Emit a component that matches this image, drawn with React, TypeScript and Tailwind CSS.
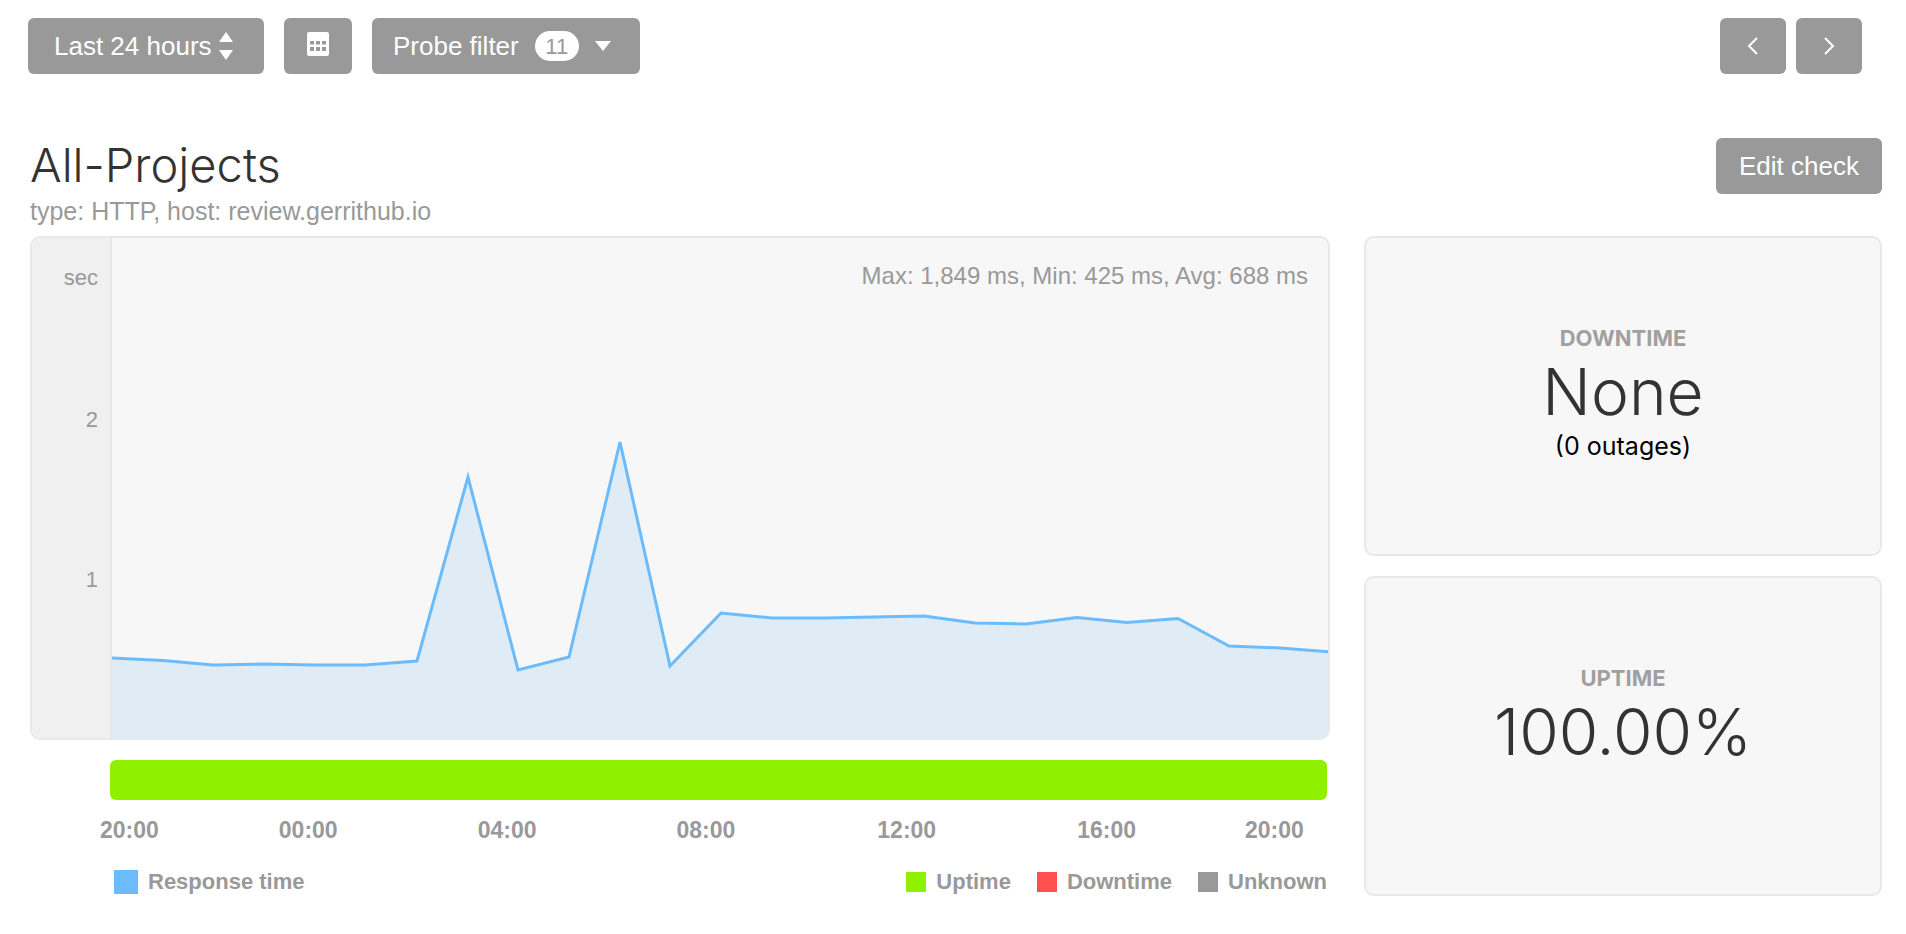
import React from "react";

const pts: [number, number][] = [
  [0, 420], [51, 422.5], [101, 427], [152, 426], [203, 427], [253, 427], [305, 423], [356, 239],
  [406, 432], [457, 419], [508, 204], [558, 428], [609, 375], [660, 380], [712, 380], [762, 379],
  [812, 378], [863, 385], [914, 386], [965, 379.5], [1015, 384.5], [1066, 380.5], [1117, 408], [1168, 410], [1218, 414],
];
const line = pts.map((p) => p.join(",")).join(" ");

const Btn = ({ className, children }: { className: string; children: React.ReactNode }) => (
  <button className={`flex h-14 items-center rounded-md bg-[#999] text-[26px] text-white ${className}`}>{children}</button>
);

const Legend = ({ color, label, className }: { color: string; label: string; className: string }) => (
  <div className={`flex items-center ${className}`}>
    <span className={`mr-[10px] h-5 w-5 ${color}`} />
    <span>{label}</span>
  </div>
);

const StatCard = ({ title, value, note }: { title: string; value: string; note?: string }) => (
  <div className="flex h-80 flex-col items-center rounded-[10px] border-2 border-[#e8e8e8] bg-[#f7f7f7] pt-[88px]">
    <div className="text-[22px] font-bold leading-6 text-[#a0a0a0]">{title}</div>
    <div className="mt-[4px] text-[64px] font-light leading-[76px] text-[#333]">{value}</div>
    {note && <div className="text-[25px] leading-8 text-black">{note}</div>}
  </div>
);

export default function App() {
  return (
    <div className="h-[934px] w-[1906px] overflow-hidden bg-white font-['Inter','Liberation_Sans',sans-serif]">
      <div className="flex items-start pl-7 pr-11 pt-[18px]">
        <Btn className="w-[236px] pl-[26px] font-['Liberation_Sans',sans-serif]">
          Last 24 hours
          <svg width="16" height="32" viewBox="0 0 16 32" className="ml-[6px]" fill="#fff">
            <path d="M8 2 L15 12 H1 Z" />
            <path d="M8 30 L15 20 H1 Z" />
          </svg>
        </Btn>
        <Btn className="ml-5 w-[68px] justify-center">
          <svg width="24" height="24" viewBox="0 0 24 24" fill="#fff" className="-mt-1">
            <path fillRule="evenodd" d="M3 0h18a2 2 0 0 1 2 2v20a2 2 0 0 1-2 2H3a2 2 0 0 1-2-2V2a2 2 0 0 1 2-2zM4 9v3.5h4V9zm6 0v3.5h4V9zm6 0v3.5h4V9zM4 15v4h4v-4zm6 0v4h4v-4zm6 0v4h4v-4z" />
          </svg>
        </Btn>
        <Btn className="ml-5 w-[268px] pl-[21px] font-['Liberation_Sans',sans-serif]">
          Probe filter
          <span className="ml-4 flex h-[30px] w-11 items-center justify-center rounded-full bg-white text-[22px] text-[#999]">11</span>
          <svg width="16" height="10" viewBox="0 0 16 10" className="ml-4" fill="#fff">
            <path d="M0 0 H16 L8 10 Z" />
          </svg>
        </Btn>
        <Btn className="ml-auto w-[66px] justify-center">
          <svg width="14" height="20" viewBox="0 0 14 20" fill="none" stroke="#fff" strokeWidth="2">
            <path d="M11 2 L3 10 L11 18" />
          </svg>
        </Btn>
        <Btn className="ml-[10px] w-[66px] justify-center">
          <svg width="14" height="20" viewBox="0 0 14 20" fill="none" stroke="#fff" strokeWidth="2">
            <path d="M3 2 L11 10 L3 18" />
          </svg>
        </Btn>
      </div>

      <div className="flex items-start justify-between pl-[30px] pr-6 pt-16">
        <div>
          <h1 className="text-[47px] font-light leading-[54px] text-[#333]">All-Projects</h1>
          <p className="mt-[4px] font-['Liberation_Sans',sans-serif] text-[25px] leading-[30px] text-[#999]">type: HTTP, host: review.gerrithub.io</p>
        </div>
        <Btn className="w-[166px] justify-center font-['Liberation_Sans',sans-serif]">Edit check</Btn>
      </div>

      <div className="flex gap-[34px] pl-[30px] pr-6 pt-[10px]">
        <div className="w-[1300px]">
          <div className="relative flex h-[504px] overflow-hidden rounded-[10px] border-2 border-[#e8e8e8] bg-[#f7f7f7]">
            <div className="w-[80px] shrink-0 border-r-2 border-[#e8e8e8] bg-[#f0f0f0] pr-[12px] pt-[26px] text-right font-['Liberation_Sans',sans-serif] text-[22px] leading-7 text-[#999]">
              <div>sec</div>
              <div className="mt-[114px]">2</div>
              <div className="mt-[132px]">1</div>
            </div>
            <svg viewBox="0 0 1218 500" className="h-[500px] w-[1218px] shrink-0">
              <polygon points={`0,500 ${line} 1218,500`} fill="#e0ecf5" />
              <polyline points={line} fill="none" stroke="#6cbcfb" strokeWidth="3" />
            </svg>
            <div className="absolute right-[20px] top-[24px] font-['Liberation_Sans',sans-serif] text-[24px] leading-7 text-[#999]">Max: 1,849 ms, Min: 425 ms, Avg: 688 ms</div>
          </div>

          <div className="ml-20 mt-5 h-10 w-[1217px] rounded-md bg-[#8ff000]" />

          <div className="mt-4 flex pl-[70px] font-['Liberation_Sans',sans-serif] text-[23px] font-bold leading-7 text-[#999]">
            <span>20:00</span>
            <span className="ml-[120px]">00:00</span>
            <span className="ml-[140px]">04:00</span>
            <span className="ml-[140px]">08:00</span>
            <span className="ml-[142px]">12:00</span>
            <span className="ml-[141px]">16:00</span>
            <span className="ml-[109px]">20:00</span>
          </div>

          <div className="mt-[26px] flex items-center pl-[84px] font-['Liberation_Sans',sans-serif] text-[22px] font-bold leading-6 text-[#999]">
            <span className="mr-[10px] h-6 w-6 bg-[#6cbcfb]" />
            <span>Response time</span>
            <Legend color="bg-[#8ff000]" label="Uptime" className="ml-auto" />
            <Legend color="bg-[#ff4f4f]" label="Downtime" className="ml-[26px]" />
            <Legend color="bg-[#999]" label="Unknown" className="ml-[26px] mr-[3px]" />
          </div>
        </div>

        <div className="flex w-[518px] flex-col gap-5">
          <StatCard title="DOWNTIME" value="None" note="(0 outages)" />
          <StatCard title="UPTIME" value="100.00%" />
        </div>
      </div>
    </div>
  );
}
